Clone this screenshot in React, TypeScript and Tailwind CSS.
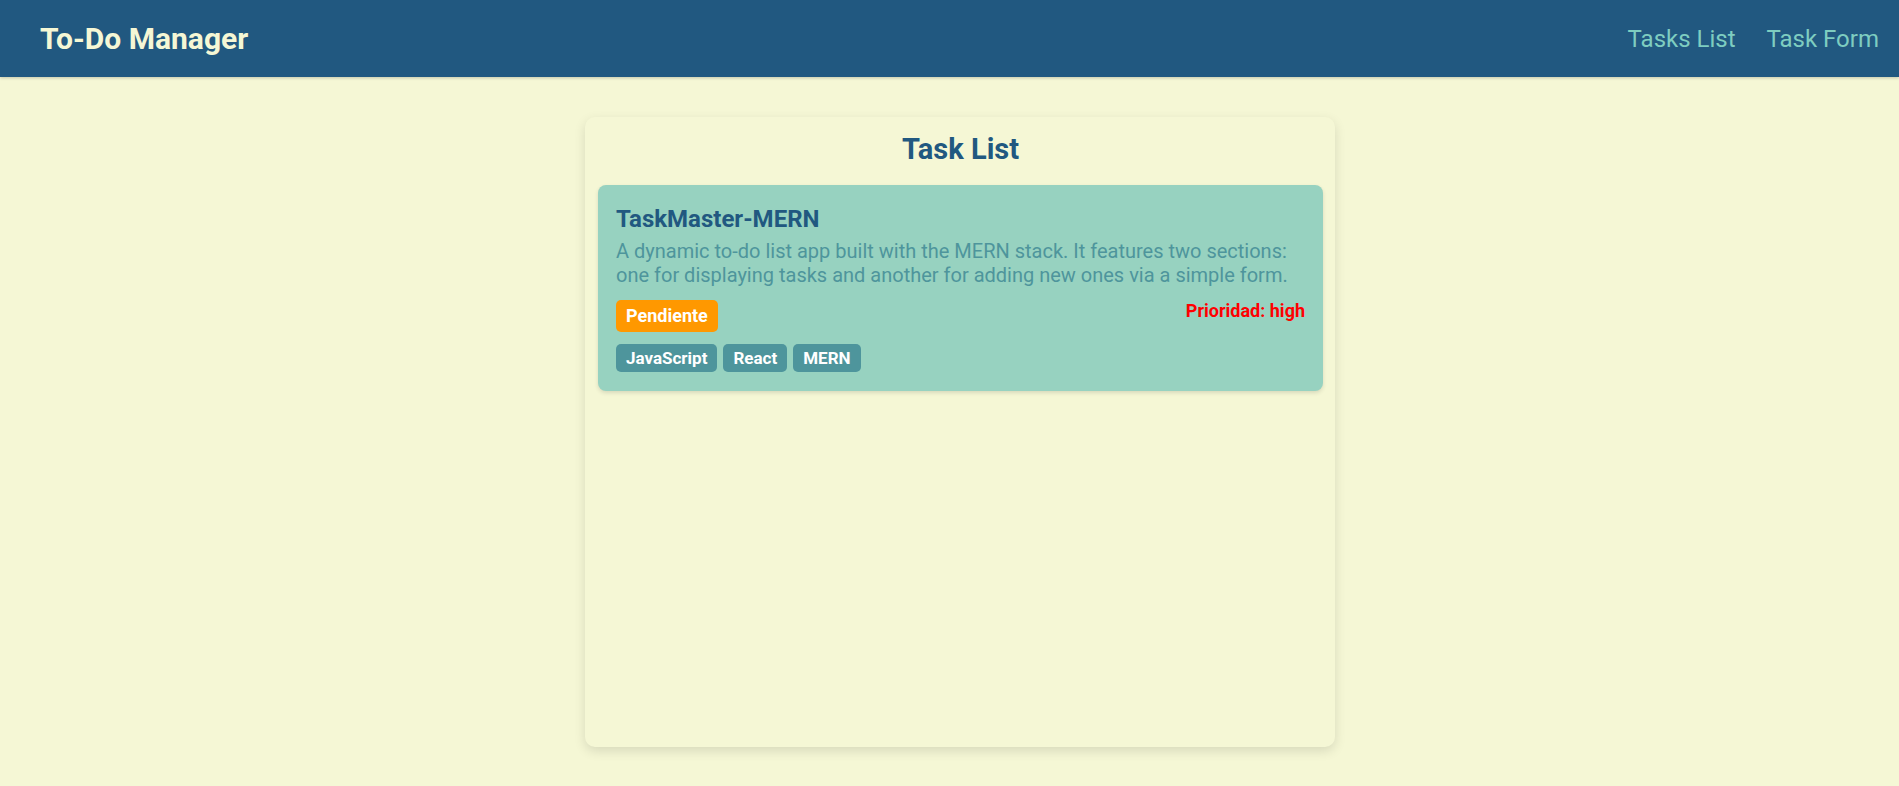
import React from "react";

interface Task {
  title: string;
  description: string;
  status: string;
  priority: string;
  tags: string[];
}

const tasks: Task[] = [
  {
    title: "TaskMaster-MERN",
    description:
      "A dynamic to-do list app built with the MERN stack. It features two sections: one for displaying tasks and another for adding new ones via a simple form.",
    status: "Pendiente",
    priority: "high",
    tags: ["JavaScript", "React", "MERN"],
  },
];

const TaskCard: React.FC<{ task: Task }> = ({ task }) => {
  return (
    <div className="bg-[#97d2c0] rounded-[8px] px-[18px] pt-[20px] pb-[19px] shadow-[0_2px_4px_rgba(0,0,0,0.12)]">
      <h3 className="text-[24px] leading-[28px] font-bold text-[#215880]">{task.title}</h3>
      <p className="text-[20px] leading-[24px] text-[#4e959c] mt-[6px]">{task.description}</p>
      <div className="flex justify-between items-start mt-[13px]">
        <span className="bg-[#ff9800] text-white font-bold text-[18px] leading-[32px] px-[10px] rounded-[5px]">
          {task.status}
        </span>
        <span className="text-[#ff0000] font-bold text-[18px] leading-[21px]">
          Prioridad: {task.priority}
        </span>
      </div>
      <div className="flex gap-[6px] mt-[12px]">
        {task.tags.map((tag) => (
          <span
            key={tag}
            className="bg-[#4e959c] text-white font-bold text-[17px] leading-[28px] px-[10px] rounded-[5px]"
          >
            {tag}
          </span>
        ))}
      </div>
    </div>
  );
};

export default function App() {
  return (
    <div className="min-h-screen bg-[#f5f7d5] font-['Roboto',sans-serif]">
      <header className="h-[77px] bg-[#215880] flex items-center justify-between pl-10 pr-5 shadow-[0_1px_3px_rgba(0,0,0,0.2)]">
        <h1 className="text-[30px] font-bold text-[#f5f7d5]">To-Do Manager</h1>
        <nav className="flex gap-[31px]">
          <a className="text-[24px] text-[#7ecdc0] cursor-pointer">Tasks List</a>
          <a className="text-[24px] text-[#7ecdc0] cursor-pointer">Task Form</a>
        </nav>
      </header>
      <main className="flex justify-center pt-10 pl-[21px]">
        <section className="w-[750px] h-[630px] bg-[#f5f7d5] rounded-[10px] shadow-[0_4px_12px_rgba(0,0,0,0.12)] pt-3 pb-3 pl-[13px] pr-3">
          <h2 className="text-center text-[29px] leading-[36px] font-bold text-[#215880] mt-[2px] mb-[18px]">
            Task List
          </h2>
          <div className="flex flex-col gap-3">
            {tasks.map((t) => (
              <TaskCard key={t.title} task={t} />
            ))}
          </div>
        </section>
      </main>
    </div>
  );
}
